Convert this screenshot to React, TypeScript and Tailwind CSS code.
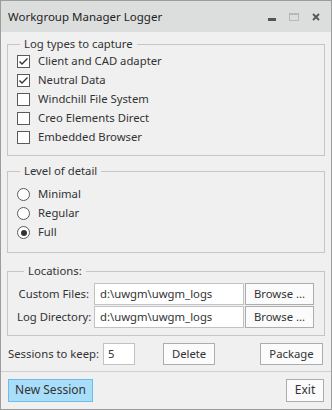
import React, { useState } from "react";

const font = { fontFamily: '"Noto Sans", "Open Sans", sans-serif' };

const CheckRow = ({ label, checked, onToggle }: { label: string; checked: boolean; onToggle: () => void }) => (
  <div className="h-[19px] flex items-center gap-[8px] cursor-default" onClick={onToggle}>
    <div className="w-[13px] h-[13px] bg-white border border-[#5a5a5a] flex items-center justify-center">
      {checked && (
        <svg width="11" height="11" viewBox="0 0 11 11">
          <path d="M1.5 5.5 L4 8 L9.5 2.5" fill="none" stroke="#333" strokeWidth="1.4" />
        </svg>
      )}
    </div>
    <span>{label}</span>
  </div>
);

const RadioRow = ({ label, checked, onSelect }: { label: string; checked: boolean; onSelect: () => void }) => (
  <div className="h-[19px] flex items-center gap-[8px] cursor-default" onClick={onSelect}>
    <div className="w-[13px] h-[13px] bg-white border border-[#5a5a5a] rounded-full flex items-center justify-center">
      {checked && <div className="w-[6px] h-[6px] rounded-full bg-[#333]" />}
    </div>
    <span>{label}</span>
  </div>
);

const Button = ({ children, className = "" }: { children: React.ReactNode; className?: string }) => (
  <button className={`h-[22px] border border-[#adadad] bg-[#fbfbfb] text-[#333] leading-none whitespace-nowrap ${className}`}>
    {children}
  </button>
);

export default function App() {
  const [types, setTypes] = useState([true, true, false, false, false]);
  const [level, setLevel] = useState(2);
  const typeNames = [
    "Client and CAD adapter",
    "Neutral Data",
    "Windchill File System",
    "Creo Elements Direct",
    "Embedded Browser",
  ];
  const levels = ["Minimal", "Regular", "Full"];

  return (
    <div
      className="w-[332px] h-[410px] bg-[#f0f0f0] border border-[#9c9c9c] flex flex-col text-[11.3px] text-[#333]"
      style={font}
    >
      {/* title bar */}
      <div className="h-[31px] shrink-0 bg-[#dcdddd] flex items-center pl-[7px] pr-[11px]">
        <span className="text-[11.5px] text-[#1e1e1e] flex-1">Workgroup Manager Logger</span>
        <div className="flex items-center gap-[13px]">
          <div className="w-[8px] h-[3px] bg-[#555] mt-[6px]" />
          <div className="w-[10px] h-[8px] border border-[#b8b8b8] border-t-2" />
          <svg width="8" height="8" viewBox="0 0 8 8">
            <path d="M1 1 L7 7 M7 1 L1 7" stroke="#555" strokeWidth="1.8" />
          </svg>
        </div>
      </div>

      <div className="flex-1 flex flex-col px-[6px]">
        <fieldset className="mt-[4px] border border-[#c6c6c6] pl-[9px] pb-[8px]">
          <legend className="ml-[3px] px-[4px] leading-[16px]">Log types to capture</legend>
          {typeNames.map((n, i) => (
            <CheckRow
              key={n}
              label={n}
              checked={types[i]}
              onToggle={() => setTypes(types.map((t, j) => (j === i ? !t : t)))}
            />
          ))}
        </fieldset>

        <fieldset className="mt-[7px] border border-[#c6c6c6] pl-[9px] pt-[6px] pb-[10px]">
          <legend className="ml-[3px] px-[4px] leading-[16px]">Level of detail</legend>
          {levels.map((n, i) => (
            <RadioRow key={n} label={n} checked={level === i} onSelect={() => setLevel(i)} />
          ))}
        </fieldset>

        <fieldset className="mt-[10px] border border-[#c6c6c6] pl-[9px] pr-[10px] pt-[4px] pb-[7px]">
          <legend className="ml-[7px] px-[4px] leading-[16px]">Locations:</legend>
          <div className="flex flex-col gap-[1px]">
            {["Custom Files:", "Log Directory:"].map((l) => (
              <div key={l} className="flex items-center h-[22px]">
                <span className="w-[77px] shrink-0 whitespace-nowrap text-right pr-[5px]">{l}</span>
                <div className="flex-1 h-full bg-white border border-[#c2c2c2] flex items-center pl-[5px] whitespace-nowrap">
                  d:\uwgm\uwgm_logs
                </div>
                <Button className="w-[69px] shrink-0 h-full ml-[1px]">Browse ...</Button>
              </div>
            ))}
          </div>
        </fieldset>

        <div className="mt-[7px] flex items-center h-[22px] pl-[1px]">
          <span className="whitespace-nowrap">Sessions to keep:</span>
          <div className="ml-[4px] w-[32px] h-full bg-white border border-[#c2c2c2] flex items-center pl-[4px]">5</div>
          <Button className="ml-[28px] w-[52px]">Delete</Button>
          <div className="flex-1" />
          <Button className="w-[63px] mr-[2px]">Package</Button>
        </div>
      </div>

      <div className="border-t border-[#d0d0d0] h-[38px] shrink-0 flex items-center justify-between px-[7px] pb-[1px]">
        <button className="h-[23px] w-[85px] bg-[#a9defb] border border-[#6ebde9] text-[#333] text-[12px] leading-none">
          New Session
        </button>
        <Button className="w-[38px] h-[23px] text-[12px]">Exit</Button>
      </div>
    </div>
  );
}
